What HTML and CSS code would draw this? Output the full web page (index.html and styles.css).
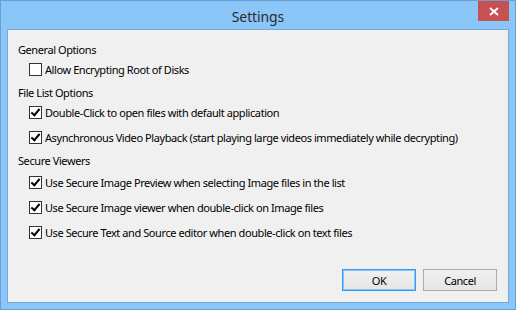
FILE: index.html
```html
<!DOCTYPE html>
<html lang="en">
<head>
  <meta charset="UTF-8">
  <title>Settings</title>
  <link rel="stylesheet" href="styles.css">
</head>
<body>

<div class="window">
  <div class="titlebar">
    <span class="caption">Settings</span>
    <div class="close-btn">
      <svg width="10" height="9" viewBox="0 0 10 9"><path d="M1 1 L9 8 M9 1 L1 8" stroke="#fff" stroke-width="2"/></svg>
    </div>
  </div>

  <div class="client">
    <div class="options">
      <div class="group">
        <div class="heading">General Options</div>
        <label class="option"><span class="check"></span>Allow Encrypting Root of Disks</label>
      </div>

      <div class="group">
        <div class="heading">File List Options</div>
        <label class="option"><span class="check on"></span>Double-Click to open files with default application</label>
        <label class="option"><span class="check on"></span>Asynchronous Video Playback (start playing large videos immediately while decrypting)</label>
      </div>

      <div class="group secure">
        <div class="heading">Secure Viewers</div>
        <label class="option"><span class="check on"></span>Use Secure Image Preview when selecting Image files in the list</label>
        <label class="option"><span class="check on"></span>Use Secure Image viewer when double-click on Image files</label>
        <label class="option"><span class="check on"></span>Use Secure Text and Source editor when double-click on text files</label>
      </div>
    </div>

    <div class="buttons">
      <div class="btn default">OK</div>
      <div class="btn">Cancel</div>
    </div>
  </div>
</div>

</body>
</html>
```

FILE: styles.css
```css
* {
  box-sizing: border-box;
  margin: 0;
  padding: 0;
}

body {
  font-family: 'Noto Sans', 'Open Sans', sans-serif;
  font-size: 11px;
  letter-spacing: -0.42px;
  color: #000;
  background: #ffffff;
}

/* okno dialogu w stylu Windows 8 */
.window {
  position: relative;
  width: 516px;
  height: 310px;
  background-color: #8bc6f8;
  border: 1px solid #6b9ed3;
  padding: 0 6px 6px;
  display: flex;
  flex-direction: column;
}

.titlebar {
  height: 28px;
  display: flex;
  align-items: center;
  justify-content: center;
}

.caption {
  font-size: 14px;
  letter-spacing: -0.1px;
  color: #2b2b2b;
  padding-top: 2px;
}

.close-btn {
  position: absolute;
  top: 0;
  right: 6px;
  width: 31px;
  height: 20px;
  background-color: #c75050;
  display: flex;
  align-items: center;
  justify-content: center;
}

.client {
  flex: 1;
  background-color: #f0f0f0;
  border: 1px solid #77a7d9;
  display: flex;
  flex-direction: column;
  padding: 10px 11px 11px 10px;
}

.options {
  flex: 1;
  display: flex;
  flex-direction: column;
  gap: 6px;
}

.group {
  display: flex;
  flex-direction: column;
  gap: 9px;
}

.heading {
  height: 18px;
  line-height: 16px;
  padding-top: 2px;
  margin-bottom: -6px;
}

.secure .heading {
  margin-bottom: -4px;
}

.option {
  display: flex;
  align-items: center;
  height: 16px;
  padding-left: 11px;
  gap: 3px;
  white-space: nowrap;
}

.check {
  width: 13px;
  height: 13px;
  border: 1px solid #333;
  background-color: #fff;
  flex-shrink: 0;
  position: relative;
}

.check.on::after {
  content: "";
  position: absolute;
  left: 3px;
  top: 0px;
  width: 3px;
  height: 7px;
  border-right: 2px solid #000;
  border-bottom: 2px solid #000;
  transform: rotate(40deg);
}

.buttons {
  display: flex;
  justify-content: flex-end;
  gap: 7px;
}

.btn {
  width: 74px;
  height: 22px;
  border: 1px solid #acacac;
  background: linear-gradient(#f0f0f0, #e5e5e5);
  display: flex;
  align-items: center;
  justify-content: center;
}

.btn.default {
  border-color: #3399ff;
  box-shadow: inset 0 0 0 1px #8cc3f5;
}
```
